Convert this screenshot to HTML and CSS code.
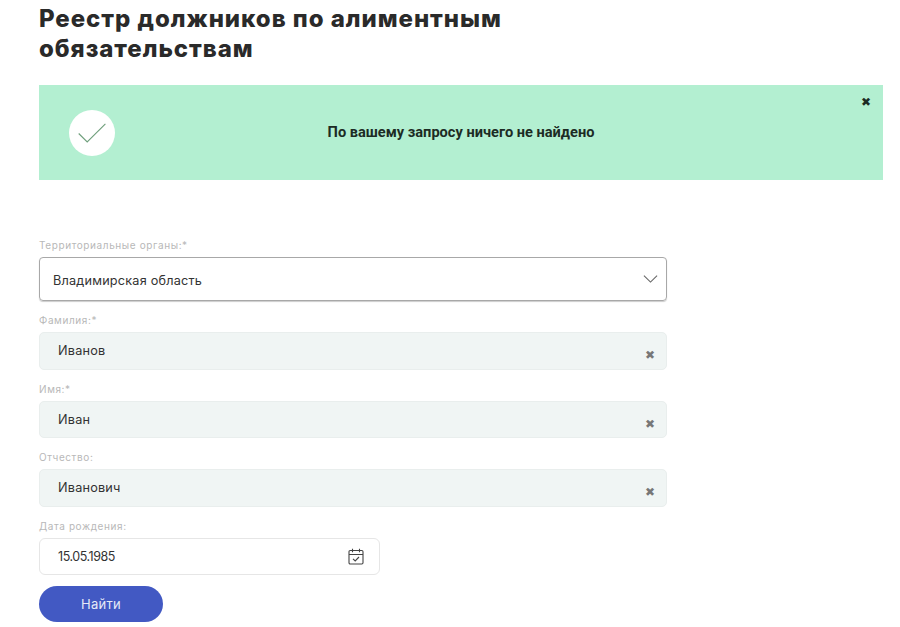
FILE: index.html
```html
<!DOCTYPE html>
<html lang="ru">
<head>
<meta charset="utf-8">
<title>Реестр должников</title>
<link rel="stylesheet" href="styles.css">
</head>
<body>
<main class="page">
  <h1 class="title">Реестр должников по алиментным<br>обязательствам</h1>
  <section class="alert">
    <span class="alert-icon">
      <svg width="28" height="20" viewBox="0 0 28 20"><path d="M.7 10.500L9.200 19 27.400.800" fill="none" stroke="#6f9f7c" stroke-width="1.100"/></svg>
    </span>
    <p class="alert-text">По вашему запросу ничего не найдено</p>
    <span class="alert-close">✖</span>
  </section>
  <form class="form">
    <label class="label">Территориальные органы:*</label>
    <div class="select">
      <span>Владимирская область</span>
      <svg width="15" height="8" viewBox="0 0 16 9"><path d="M.6.800L8 8 15.400.800" fill="none" stroke="#666" stroke-width="1.200"/></svg>
    </div>
    <label class="label">Фамилия:*</label>
    <div class="input"><span>Иванов</span><span class="clear">✖</span></div>
    <label class="label">Имя:*</label>
    <div class="input"><span>Иван</span><span class="clear">✖</span></div>
    <label class="label">Отчество:</label>
    <div class="input"><span>Иванович</span><span class="clear">✖</span></div>
    <label class="label">Дата рождения:</label>
    <div class="date">
      <span class="date-value">15.05.1985</span>
      <svg width="16" height="17" viewBox="0 0 16 17" fill="none" stroke="#444" stroke-width="1.100"><rect x="1" y="2.500" width="14" height="13.500" rx="1.200"/><path d="M1 6.500h14M4.500.800v3.500M11.500.800v3.500M5 10.800l2.200 2.200 3.800-4"/></svg>
    </div>
    <button type="button" class="submit">Найти</button>
  </form>
</main>
</body>
</html>
```
FILE: styles.css
```css
* { box-sizing: border-box; }
html, body { margin: 0; background: #fff; }
body { font-family: "Inter", sans-serif; color: #333; height: 627px; overflow: hidden; }
.page { padding: 4px 17px 0 39px; }
.title { margin: 0 0 21px; font-size: 24px; line-height: 30px; font-weight: 800; color: #2a2a2a; letter-spacing: .95px; }
.alert { position: relative; display: flex; align-items: center; height: 95px; background: #b3efd1; padding-left: 30px; }
.alert-icon { display: flex; align-items: center; justify-content: center; width: 46px; height: 46px; border-radius: 50%; background: #fff; }
.alert-text { flex: 1; margin: 0 0 1px; padding-right: 76px; text-align: center; font: 700 14.600px "Roboto", sans-serif; color: #1c2b24; }
.alert-close { position: absolute; top: 9px; right: 12px; font-size: 12px; color: #1c2b24; }
.form { display: flex; flex-direction: column; align-items: flex-start; margin-top: 59px; }
.label { font-size: 10px; line-height: 12px; color: #b8b8b8; margin-bottom: 6px; letter-spacing: .6px; }
.select, .input, .date { display: flex; align-items: center; justify-content: space-between; font-size: 12.700px; letter-spacing: .2px; }
.select { width: 628px; height: 44px; border: 1px solid #a8a8a8; border-radius: 4px; padding: 2px 8px 0 13px; margin-bottom: 13px; box-shadow: 0 1px 1px #ccc; }
.select svg { margin-top: -2px; }
.input { width: 628px; height: 37.500px; background: #f0f5f4; border: 1px solid #e9eeed; border-radius: 5px; padding: 0 11px 0 18px; margin-bottom: 13px; }
.clear { font-size: 12px; color: #777; margin-top: 8px; }
.date { width: 341px; height: 37.500px; border: 1px solid #e6e6e6; border-radius: 6px; padding: 0 15px 0 18px; margin-bottom: 10.500px; }
.date-value { font-size: 12.500px; letter-spacing: -.45px; }
.submit { width: 124px; height: 36px; border: 0; border-radius: 18px; background: #4259c3; color: #e6e9f7; font: 13px "Inter", sans-serif; letter-spacing: .3px; }
```
